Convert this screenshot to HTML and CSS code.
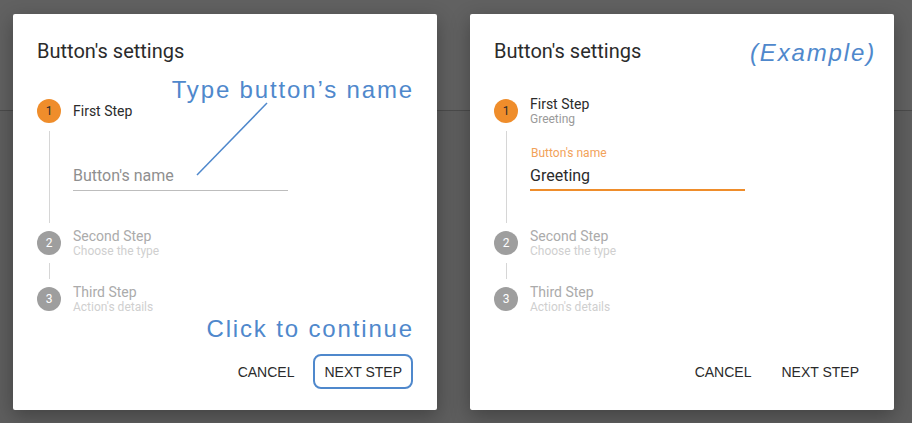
FILE: index.html
```html
<!DOCTYPE html>
<html lang="en">
<head>
    <meta charset="UTF-8">
    <meta name="viewport" content="width=device-width, initial-scale=1.0">
    <title>Button's settings</title>
    <link rel="stylesheet" href="styles.css">
</head>
<body>
    <div class="page">
        <!-- dialog with hints -->
        <div class="dialog">
            <h2 class="dialog-title">Button's settings</h2>

            <div class="step">
                <div class="step-head">
                    <span class="step-icon active">1</span>
                    <div class="step-text">
                        <span class="step-label active">First Step</span>
                    </div>
                </div>
                <div class="step-content">
                    <div class="field">
                        <label class="field-label hidden">Button's name</label>
                        <input class="field-input" type="text" placeholder="Button's name">
                    </div>
                </div>
            </div>

            <div class="step">
                <div class="step-head">
                    <span class="step-icon">2</span>
                    <div class="step-text">
                        <span class="step-label">Second Step</span>
                        <span class="step-sub">Choose the type</span>
                    </div>
                </div>
                <div class="step-connector"></div>
            </div>

            <div class="step">
                <div class="step-head">
                    <span class="step-icon">3</span>
                    <div class="step-text">
                        <span class="step-label">Third Step</span>
                        <span class="step-sub">Action's details</span>
                    </div>
                </div>
            </div>

            <div class="dialog-actions">
                <button class="btn">CANCEL</button>
                <button class="btn btn-outlined">NEXT STEP</button>
            </div>

            <span class="hint hint-type">Type button’s name</span>
            <svg class="hint-arrow" width="80" height="80" viewBox="0 0 80 80">
                <line x1="74" y1="2" x2="4" y2="74" stroke="#4f88cc" stroke-width="1.5"/>
            </svg>
            <span class="hint hint-click">Click to continue</span>
        </div>

        <!-- filled example -->
        <div class="dialog">
            <h2 class="dialog-title">Button's settings</h2>

            <div class="step">
                <div class="step-head">
                    <span class="step-icon active">1</span>
                    <div class="step-text">
                        <span class="step-label active">First Step</span>
                        <span class="step-sub active">Greeting</span>
                    </div>
                </div>
                <div class="step-content">
                    <div class="field focused">
                        <label class="field-label">Button's name</label>
                        <input class="field-input" type="text" value="Greeting">
                    </div>
                </div>
            </div>

            <div class="step">
                <div class="step-head">
                    <span class="step-icon">2</span>
                    <div class="step-text">
                        <span class="step-label">Second Step</span>
                        <span class="step-sub">Choose the type</span>
                    </div>
                </div>
                <div class="step-connector"></div>
            </div>

            <div class="step">
                <div class="step-head">
                    <span class="step-icon">3</span>
                    <div class="step-text">
                        <span class="step-label">Third Step</span>
                        <span class="step-sub">Action's details</span>
                    </div>
                </div>
            </div>

            <div class="dialog-actions">
                <button class="btn">CANCEL</button>
                <button class="btn">NEXT STEP</button>
            </div>

            <span class="hint hint-example">(Example)</span>
        </div>
    </div>
</body>
</html>
```

FILE: styles.css
```css
* {
    box-sizing: border-box;
}

body {
    margin: 0;
    font-family: Roboto, "Liberation Sans", sans-serif;
    background: linear-gradient(to bottom, #616161 0, #616161 110px, #4b4b4b 110px, #4b4b4b 111px, #5e5e5e 111px);
    height: 423px;
    overflow: hidden;
}

.page {
    display: flex;
    gap: 33px;
    padding: 14px 13px;
}

.dialog {
    position: relative;
    width: 424px;
    height: 396px;
    background: #fff;
    border-radius: 2px;
    box-shadow: 0 6px 20px rgba(0, 0, 0, 0.3);
    padding: 25px 24px 0 24px;
    display: flex;
    flex-direction: column;
}

.dialog-title {
    margin: 0 0 36px 0;
    font-size: 20px;
    line-height: 24px;
    font-weight: 400;
    color: #2b2b2b;
}

.step-head {
    display: flex;
    align-items: center;
    height: 24px;
}

.step-icon {
    width: 24px;
    height: 24px;
    border-radius: 50%;
    background: #9e9e9e;
    color: #fff;
    font-size: 12px;
    display: flex;
    align-items: center;
    justify-content: center;
    flex-shrink: 0;
}

.step-icon.active {
    background: #ef8d2b;
    color: #2b2b2b;
}

.step-text {
    display: flex;
    flex-direction: column;
    margin-left: 12px;
}

.step-label {
    font-size: 14px;
    line-height: 16px;
    color: #ababab;
}

.step-label.active {
    color: #2b2b2b;
}

.step-sub {
    font-size: 12px;
    line-height: 14px;
    color: #cfcfcf;
}

.step-sub.active {
    color: #9a9a9a;
}

.step-content {
    margin: 8px 0 8px 12px;
    border-left: 1px solid #d6d6d6;
    padding: 15px 0 0 23px;
    height: 92px;
}

.step-connector {
    margin: 8px 0 8px 12px;
    border-left: 1px solid #d6d6d6;
    height: 16px;
}

.field {
    width: 215px;
    display: flex;
    flex-direction: column;
    border-bottom: 1px solid #bdbdbd;
    padding-bottom: 4px;
}

.field.focused {
    border-bottom: 2px solid #ef8d2b;
    padding-bottom: 3px;
}

.field-label {
    font-size: 12px;
    line-height: 14px;
    color: #f2a25a;
    margin-bottom: 6px;
    padding-left: 1px;
}

.field-label.hidden {
    visibility: hidden;
}

.field-input {
    border: none;
    outline: none;
    padding: 0;
    font-family: inherit;
    font-size: 16px;
    line-height: 20px;
    height: 20px;
    color: #2b2b2b;
    background: transparent;
}

.field-input::placeholder {
    color: #8f8f8f;
}

.dialog-actions {
    margin-top: auto;
    display: flex;
    justify-content: flex-end;
    gap: 8px;
    padding: 0 0 21px 0;
}

.btn {
    font-family: "Liberation Sans", Arial, sans-serif;
    font-size: 14px;
    color: #2b2b2b;
    background: transparent;
    border: 2px solid transparent;
    border-radius: 8px;
    height: 35px;
    padding: 0 9px;
    cursor: pointer;
}

.btn-outlined {
    border-color: #4f88cc;
}

.hint {
    position: absolute;
    font-family: "Liberation Sans", sans-serif;
    font-size: 24px;
    line-height: 28px;
    letter-spacing: 1.85px;
    color: #4f88cc;
    white-space: nowrap;
}

.hint-type {
    right: 23px;
    top: 62px;
}

.hint-click {
    right: 23px;
    top: 301px;
}

.hint-example {
    right: 18px;
    top: 25px;
    font-style: italic;
}

.hint-arrow {
    position: absolute;
    left: 180px;
    top: 87px;
}
```
